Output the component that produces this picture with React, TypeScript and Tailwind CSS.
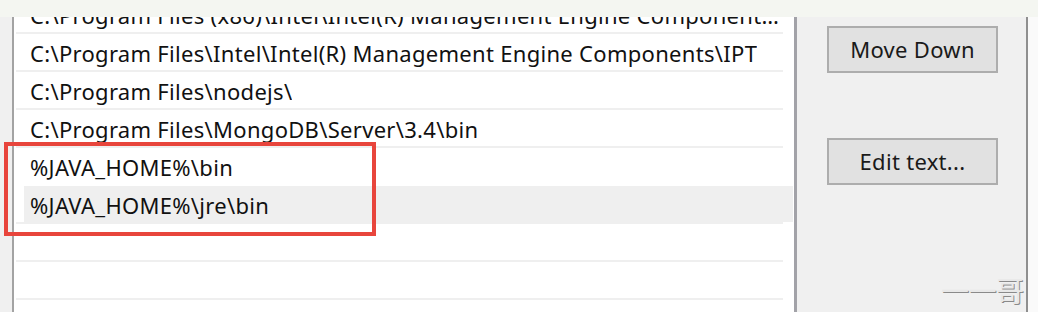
const rows = [
  "C:\\Program Files (x86)\\Intel\\Intel(R) Management Engine Components\\DAL",
  "C:\\Program Files\\Intel\\Intel(R) Management Engine Components\\IPT",
  "C:\\Program Files\\nodejs\\",
  "C:\\Program Files\\MongoDB\\Server\\3.4\\bin",
  "%JAVA_HOME%\\bin",
  "%JAVA_HOME%\\jre\\bin",
  "",
  "",
  "",
];

const font = { fontFamily: '"Noto Sans", "Open Sans", sans-serif' };

export default function App() {
  return (
    <div
      className="relative w-[1038px] h-[312px] overflow-hidden bg-[#f4f6f1] flex flex-col text-[#111]"
      style={font}
    >
      {/* top band */}
      <div className="h-[17px] shrink-0" />

      <div className="flex-1 flex min-h-0">
        <div className="w-[12px] bg-[#f0f0f0]" />
        <div className="w-[2px] bg-[#a3a3a3]" />

        {/* list */}
        <div className="w-[779px] bg-white overflow-hidden">
          <div className="-mt-[21px]">
            {rows.map((r, i) => (
              <div key={i} className="h-[38px] flex flex-col">
                <div
                  className={`flex-1 min-w-0 flex items-center pt-[2px] pr-[14px] ${
                    i === 5 ? "ml-[10px] pl-[6px] bg-[#efefef]" : "pl-[16px]"
                  }`}
                >
                  <span className="truncate text-[22px] leading-normal tracking-[0.3px]">{r}</span>
                </div>
                <div
                  className={`h-[2px] ml-[2px] mr-[10px] ${
                    i === 4 ? "bg-transparent" : "bg-[#efefef]"
                  }`}
                />
              </div>
            ))}
          </div>
        </div>

        <div className="w-[1px] bg-white" />
        <div className="w-[3px] bg-[#a2a2a8]" />

        {/* button panel */}
        <div className="w-[229px] bg-[#f0f0f0] pl-[30px] pt-[9px] flex flex-col gap-[65px]">
          <button className="w-[171px] h-[47px] bg-[#e1e1e1] border-2 border-[#adadad] text-[22px] tracking-[0.3px] text-[#1a1a1a]">
            Move Down
          </button>
          <button className="w-[171px] h-[47px] bg-[#e1e1e1] border-2 border-[#adadad] text-[22px] tracking-[0.3px] text-[#1a1a1a]">
            Edit text...
          </button>
        </div>

        <div className="w-[2px] bg-[#8f8f8f]" />
        <div className="flex-1 bg-[#fafafa]" />
      </div>

      {/* highlight */}
      <div className="absolute left-[4px] top-[142px] w-[372px] h-[94px] border-4 border-[#e8453c]" />

      {/* watermark */}
      <div
        className="absolute left-[941px] top-[276px] text-[28px] leading-none text-[#e8e8e8] tracking-[-0.5px]"
        style={{
          fontFamily: '"Noto Sans CJK SC", sans-serif',
          textShadow: "1px 1px 0 #8a8a8a",
        }}
      >
        一一哥
      </div>
    </div>
  );
}
